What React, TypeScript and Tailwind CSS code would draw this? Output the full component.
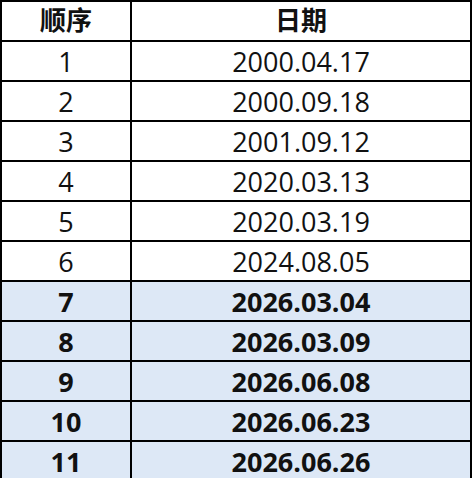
import React from "react";

const rows: [string, string][] = [
  ["1", "2000.04.17"],
  ["2", "2000.09.18"],
  ["3", "2001.09.12"],
  ["4", "2020.03.13"],
  ["5", "2020.03.19"],
  ["6", "2024.08.05"],
  ["7", "2026.03.04"],
  ["8", "2026.03.09"],
  ["9", "2026.06.08"],
  ["10", "2026.06.23"],
  ["11", "2026.06.26"],
];

export default function App() {
  return (
    <div className="w-[473px] h-[478px] overflow-hidden bg-white">
      <div
        className="w-[472px] border-t-2 border-l-2 border-r-2 border-black text-[#111]"
        style={{ fontFamily: '"Open Sans", "Noto Sans CJK SC", sans-serif' }}
      >
        <div className="flex h-[40px] border-b-2 border-black">
          <div className="w-[130px] border-r-2 border-black flex items-center justify-center text-[26px] font-bold pb-[2px]">
            顺序
          </div>
          <div className="flex-1 flex items-center justify-center text-[26px] font-bold pb-[2px]">
            日期
          </div>
        </div>
        {rows.map(([n, d], i) => {
          const hl = i >= 6;
          return (
            <div
              key={n}
              className={`flex h-[40px] border-b-2 border-black text-[27px] leading-none ${
                hl ? "bg-[#dde8f6] font-bold" : "bg-white"
              }`}
            >
              <div className="w-[130px] border-r-2 border-black flex items-center justify-center">
                {n}
              </div>
              <div className="flex-1 flex items-center justify-center">{d}</div>
            </div>
          );
        })}
      </div>
    </div>
  );
}
